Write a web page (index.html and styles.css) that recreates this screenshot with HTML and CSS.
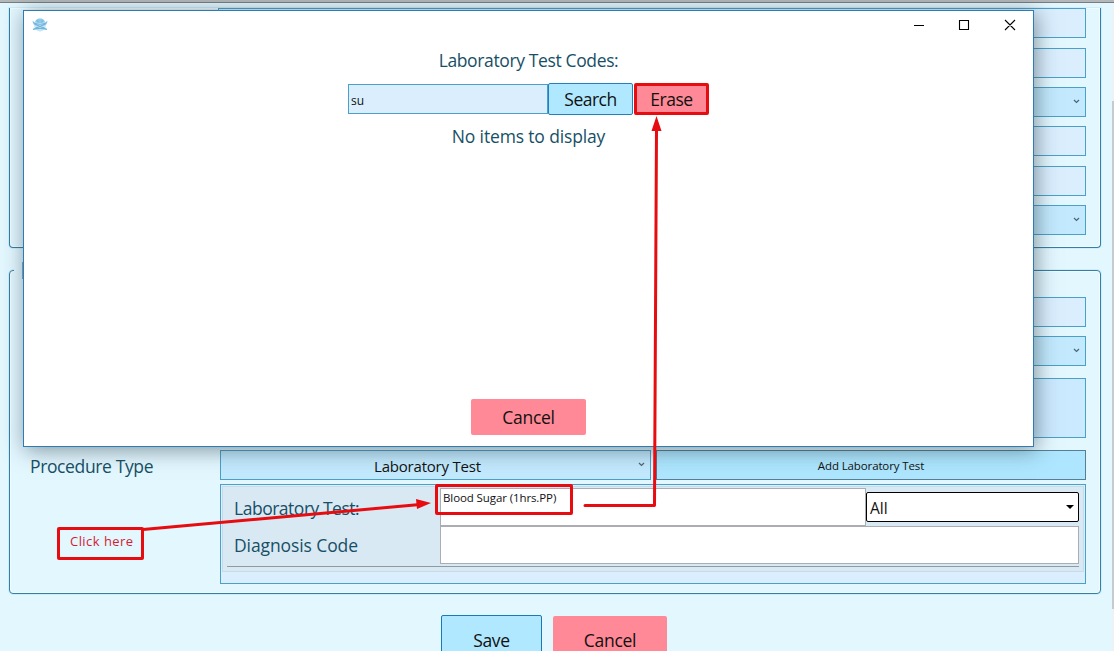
FILE: index.html
```html
<!DOCTYPE html>
<html lang="en">
<head>
<meta charset="utf-8">
<title>Laboratory Test Codes</title>
<link rel="stylesheet" href="styles.css">
</head>
<body>
<div class="page">
  <div class="topline"></div>
  <div class="scrollbar"><div class="thumb"></div></div>
  <section class="group group-first">
    <div class="field"></div>
    <div class="field"></div>
    <div class="field select"><svg class="chev" viewBox="0 0 7 5"><path d="M1 1l2.500 2.500L6 1"/></svg></div>
    <div class="field"></div>
    <div class="field"></div>
    <div class="field select"><svg class="chev" viewBox="0 0 7 5"><path d="M1 1l2.500 2.500L6 1"/></svg></div>
  </section>
  <section class="group group-second">
    <div class="legend"></div>
    <div class="field"></div>
    <div class="field select"><svg class="chev" viewBox="0 0 7 5"><path d="M1 1l2.500 2.500L6 1"/></svg></div>
    <div class="field area"></div>
    <div class="procedure">
      <div class="label"><span class="t-proc">Procedure Type</span></div>
      <div class="field select type"><span class="t-type">Laboratory Test</span><svg class="chev" viewBox="0 0 7 5"><path d="M1 1l2.500 2.500L6 1"/></svg></div>
      <div class="add"><span class="t-add">Add Laboratory Test</span></div>
    </div>
    <div class="panel">
      <div class="entry">
        <div class="row">
          <div class="label"><span class="t-lab">Laboratory Test:</span></div>
          <div class="input"><span class="t-blood">Blood Sugar (1hrs.PP)</span></div>
          <div class="combo"><span class="t-all">All</span><i class="tri"></i></div>
        </div>
        <div class="row">
          <div class="label"><span class="t-diag">Diagnosis Code</span></div>
          <div class="input"></div>
        </div>
        <div class="rule"></div>
      </div>
    </div>
  </section>
  <div class="actions">
    <div class="btn save"><span class="t-save">Save</span></div>
    <div class="btn danger"><span class="t-cancel">Cancel</span></div>
  </div>

  <div class="dialog">
    <div class="titlebar">
      <svg class="logo" viewBox="0 0 16 14"><path d="M3 4.500C4 1 6 .5 8 .5s4 .5 5 4L14 8l-1.500 4L8 13.800 3.500 12 2 8z" fill="#c9e6f7"/><path d="M3 4c.8-2.500 2.500-3.500 5-3.500s4.200 1 5 3.500c-2.500 1.200-7.500 1.200-10 0z" fill="#8fcaeb"/><path d="M.8 3.500c1.200 2.200 3.200 2.700 7.200 2.700s6-.5 7.200-2.700M1.500 5.500C5 8 11 8.500 15 11.500M14.500 5.500C11 8 5 8.500 1 11.500M1 11.500c4-1.300 10-1.300 14 0M5.500 2.500l1 2M10.500 2.500l-1 2" fill="none" stroke="#6fb4dd" stroke-width="1.100"/></svg>
      <svg class="winbtns" viewBox="0 0 104 12"><path d="M0 6.500h10M45.500 1.500h9v9h-9zM91 1l10 10M101 1L91 11" fill="none" stroke="#000" stroke-width="1.100"/></svg>
    </div>
    <div class="heading"><span class="t-head">Laboratory Test Codes:</span></div>
    <div class="searchrow">
      <div class="query"><span class="t-su">su</span></div>
      <div class="search"><span class="t-search">Search</span></div>
      <div class="erase"><span class="t-erase">Erase</span></div>
    </div>
    <div class="empty"><span class="t-empty">No items to display</span></div>
    <div class="dialog-cancel"><span class="t-cancel">Cancel</span></div>
  </div>

  <svg class="arrows" viewBox="0 0 1114 651">
    <path d="M143 529.500L420 504.500M585 505.500H654.500L656.500 128" fill="none" stroke="#e60c10" stroke-width="3" stroke-linecap="round" stroke-linejoin="round"/>
    <path d="M431 503l-15-4 1 10zM656.500 116l-5 15h10z" fill="#e60c10"/>
  </svg>
  <div class="mark mark-blood"></div>
  <div class="mark mark-click"><span class="t-click">Click here</span></div>
</div>
</body>
</html>
```
FILE: styles.css
```css
* { box-sizing: border-box; }
body { margin: 0; font-family: "Open Sans", "Noto Sans", sans-serif; color: #174f66; }
span { white-space: nowrap; }
.page { position: relative; width: 1114px; height: 651px; overflow: hidden; background: #e3f7ff; display: flex; flex-direction: column; }
.topline { flex: none; height: 3px; background: #b5b8b9; border-bottom: 1px solid #777d80; }
.scrollbar { position: absolute; right: 0; top: 8px; width: 2px; height: 643px; background: #edf2f4; padding-top: 93px; }
.thumb { height: 508px; background: #c5cbce; }

.group { position: relative; flex: none; width: 1092px; margin-left: 9px; border: 1px solid #337fa8; border-radius: 4px; box-shadow: inset 0 0 0 1px #f2fcff, 0 0 0 1px #cdeefa; padding: 0 14px 0 210px; display: flex; flex-direction: column; }
.group-first { height: 240px; margin-top: 5px; border-top: 0; border-radius: 0 0 4px 4px; padding-left: 208px; }
.group-second { height: 324px; margin-top: 22px; padding-top: 26px; }
/* Title chip that interrupts the top border of the group */
.legend { position: absolute; left: 4px; top: -9px; width: 40px; height: 17px; background: #7fa9c9; border-left: 8px solid #e3f7ff; }
.field { flex: none; height: 30px; border: 1px solid #4aa0c8; background: #daeefe; margin-bottom: 9px; }
.group-first .field:nth-child(1), .group-first .field:nth-child(4) { margin-bottom: 10px; }
.select { background: #c2e9fd; display: flex; align-items: center; justify-content: flex-end; padding-right: 5px; }
.chev { width: 7px; height: 5px; flex: none; margin-bottom: 2px; }
.chev path { fill: none; stroke: #4d6573; stroke-width: 1.2; }
.field.area { height: 60px; margin-top: 3px; margin-bottom: 12px; background: #cbe9ff; }
.procedure { display: flex; flex: none; height: 30px; margin-left: -190px; }
.procedure .label { width: 190px; padding-top: 2px; }
.label { display: flex; align-items: center; font-size: 18px; flex: none; }
.type { width: 431px; justify-content: space-between; padding-left: 153px; color: #111; margin: 0; }
.add { margin-left: 5px; flex: 1; border: 1px solid #557f92; background: #ade6fe; color: #111; display: flex; justify-content: center; align-items: center; font-size: 12px; }
.panel { flex: none; height: 100px; margin-top: 4px; border: 1px solid #4aa0c8; background: #daeefe; padding: 1px; }
.entry { height: 86px; border: 1px solid #c9dbe6; background: #d9e9f3; padding: 1px 4px 0; }
.row { display: flex; height: 38px; }
.row .label { width: 213px; padding-left: 7px; }
.row:first-child .label { padding-top: 2px; }
.input { flex: 1; height: 38px; background: #fff; border: 1px solid #abadb3; color: #111; line-height: 15px; padding-left: 2px; }
.combo { width: 213px; height: 30px; margin-top: 4px; border: 1px solid #000; border-radius: 2px; background: #fff; color: #111; display: flex; align-items: center; justify-content: space-between; padding: 0 4px 0 3px; }
.tri { border: 4px solid transparent; border-top-color: #000; border-bottom: 0; }
.rule { height: 1px; background: #8f9aa3; margin: 2px 0 0 0; }

.actions { flex: none; display: flex; gap: 11px; margin: 21px 0 0 441px; color: #111; }
.btn { display: flex; justify-content: center; align-items: center; height: 50px; }
.save { width: 101px; border: 1px solid #1b7ab5; border-radius: 2px; background: #b0e8ff; }
.danger { width: 114px; height: 48px; margin-top: 1px; background: #ff8996; border-radius: 2px; }

.dialog { position: absolute; left: 23px; top: 10px; width: 1011px; height: 437px; border: 1px solid #2d7cb6; background: #fff; box-shadow: 2px 3px 20px rgba(30,50,60,.5); display: flex; flex-direction: column; align-items: center; }
.titlebar { align-self: stretch; height: 35px; display: flex; justify-content: space-between; padding: 7px 15px 0 8px; }
.logo { width: 16px; height: 14px; }
.winbtns { width: 104px; height: 12px; margin-top: 1px; }
.heading { height: 28px; line-height: 28px; }
.searchrow { display: flex; height: 32px; margin-top: 9px; color: #111; }
.query { width: 200px; height: 30px; margin-top: 1px; border: 1px solid #4aa0c8; background: #daeefe; line-height: 28px; padding-left: 2px; }
.search { width: 85px; border: 1px solid #2380bd; border-radius: 2px; background: #b0e8ff; display: flex; align-items: center; justify-content: center; }
.erase { width: 75px; margin: 0 0 0 1px; height: 32px; border: 3px solid #e60c10; border-radius: 2px; background: #ff8996; display: flex; align-items: center; justify-content: center; }
.empty { margin-top: 7px; height: 28px; line-height: 28px; }
.dialog-cancel { width: 115px; height: 36px; margin-top: 249px; background: #ff8996; border-radius: 2px; color: #111; display: flex; align-items: center; justify-content: center; }

.arrows { position: absolute; left: 0; top: 0; width: 1114px; height: 651px; }
.mark { position: absolute; border: 3px solid #e60c10; border-radius: 2px; }
.mark-blood { left: 435px; top: 484px; width: 138px; height: 31px; }
.mark-click { left: 57px; top: 527px; width: 87px; height: 33px; color: #d71a32; padding-left: 10px; line-height: 21px; }

.t-head { font-size: 17.5px; letter-spacing: -.37px; }
.t-empty { font-size: 17.5px; letter-spacing: -.15px; }
.t-search, .t-erase { font-size: 17.5px; letter-spacing: -.5px; }
.t-cancel, .t-save { font-size: 17.5px; letter-spacing: -.3px; }
.t-proc { font-size: 17.5px; letter-spacing: -.37px; }
.t-lab { font-size: 17.5px; letter-spacing: -.48px; }
.t-diag { font-size: 17.5px; letter-spacing: -.1px; }
.t-type { font-size: 15px; letter-spacing: -.2px; padding-top: 2px; }
.t-all { font-size: 15.5px; padding-top: 1px; }
.t-add { font-size: 11.5px; letter-spacing: -.12px; }
.t-blood { font-size: 11.5px; letter-spacing: -.1px; }
.t-su { font-size: 12px; }
.t-click { font-size: 13px; letter-spacing: .45px; }
```
